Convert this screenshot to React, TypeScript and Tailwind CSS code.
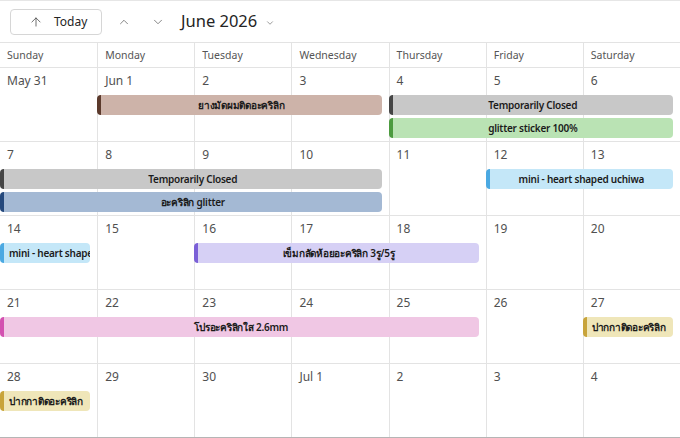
import { ArrowUp, ChevronDown, ChevronUp } from 'lucide-react'

type Tone = 'brown' | 'gray' | 'green' | 'steel' | 'sky' | 'violet' | 'pink' | 'gold'

interface CalEvent {
  title: string
  start: number
  span: number
  lane: number
  tone: Tone
}

interface Week {
  days: string[]
  events: CalEvent[]
}

const toneClass: Record<Tone, string> = {
  brown: 'bg-[#cdb3a9] border-[#5b3a2c]',
  gray: 'bg-[#c8c8c8] border-[#454545]',
  green: 'bg-[#bae3b4] border-[#4c9b3f]',
  steel: 'bg-[#a4b9d4] border-[#24487c]',
  sky: 'bg-[#c4e7f8] border-[#4ba9e2]',
  violet: 'bg-[#d6d0f5] border-[#7b60d7]',
  pink: 'bg-[#f0c7e4] border-[#d350b0]',
  gold: 'bg-[#efe6b9] border-[#c8a43b]',
}

const colStart = ['col-start-1', 'col-start-2', 'col-start-3', 'col-start-4', 'col-start-5', 'col-start-6', 'col-start-7']
const colSpan = ['', 'col-span-1', 'col-span-2', 'col-span-3', 'col-span-4', 'col-span-5', 'col-span-6', 'col-span-7']
const laneRow = ['row-start-2', 'row-start-3']

const dayNames = ['Sunday', 'Monday', 'Tuesday', 'Wednesday', 'Thursday', 'Friday', 'Saturday']

const weeks: Week[] = [
  {
    days: ['May 31', 'Jun 1', '2', '3', '4', '5', '6'],
    events: [
      { title: 'ยางมัดผมติดอะคริลิก', start: 1, span: 3, lane: 0, tone: 'brown' },
      { title: 'Temporarily Closed', start: 4, span: 3, lane: 0, tone: 'gray' },
      { title: 'glitter sticker 100%', start: 4, span: 3, lane: 1, tone: 'green' },
    ],
  },
  {
    days: ['7', '8', '9', '10', '11', '12', '13'],
    events: [
      { title: 'Temporarily Closed', start: 0, span: 4, lane: 0, tone: 'gray' },
      { title: 'อะคริลิก glitter', start: 0, span: 4, lane: 1, tone: 'steel' },
      { title: 'mini - heart shaped uchiwa', start: 5, span: 2, lane: 0, tone: 'sky' },
    ],
  },
  {
    days: ['14', '15', '16', '17', '18', '19', '20'],
    events: [
      { title: 'mini - heart shaped uchiwa', start: 0, span: 1, lane: 0, tone: 'sky' },
      { title: 'เข็มกลัดห้อยอะคริลิก 3รู/5รู', start: 2, span: 3, lane: 0, tone: 'violet' },
    ],
  },
  {
    days: ['21', '22', '23', '24', '25', '26', '27'],
    events: [
      { title: 'โปรอะคริลิกใส 2.6mm', start: 0, span: 5, lane: 0, tone: 'pink' },
      { title: 'ปากกาติดอะคริลิก', start: 6, span: 1, lane: 0, tone: 'gold' },
    ],
  },
  {
    days: ['28', '29', '30', 'Jul 1', '2', '3', '4'],
    events: [{ title: 'ปากกาติดอะคริลิก', start: 0, span: 1, lane: 0, tone: 'gold' }],
  },
]

function EventBar({ ev }: { ev: CalEvent }) {
  const single = ev.span === 1
  return (
    <div
      className={`${colStart[ev.start]} ${colSpan[ev.span]} ${laneRow[ev.lane]} z-10 mr-[7px] flex h-[20px] items-center overflow-hidden whitespace-nowrap rounded-[4px] border-l-[4px] text-[10px] font-semibold leading-none tracking-[-0.25px] text-[#1b1b1b] ${toneClass[ev.tone]} ${single ? 'justify-start pl-[5px]' : 'justify-center'}`}
    >
      {ev.title}
    </div>
  )
}

export default function App() {
  return (
    <div className="h-[438px] w-[680px] overflow-hidden border-t border-[#e6e6e6] bg-white font-['Segoe_UI','Noto_Sans',sans-serif] text-[#242424]">
      {/* toolbar */}
      <div className="flex h-[41px] items-center pl-[10px]">
        <button className="flex h-[26px] w-[92px] items-center gap-[11px] rounded-[4px] border border-[#d6d6d6] pl-[18px] text-[12px]">
          <ArrowUp size={14} strokeWidth={1.3} className="text-[#424242]" />
          <span>Today</span>
        </button>
        <ChevronUp size={14} strokeWidth={1.3} className="ml-[15px] text-[#616161]" />
        <ChevronDown size={14} strokeWidth={1.3} className="ml-[20px] text-[#616161]" />
        <span className="ml-[16px] text-[16.5px] leading-none">June 2026</span>
        <ChevronDown size={10} strokeWidth={1.5} className="ml-[8px] mt-[2px] text-[#616161]" />
      </div>

      {/* weekday header */}
      <div className="grid h-[26px] grid-cols-7 border-y border-[#e3e3e3]">
        {dayNames.map((d, i) => (
          <div
            key={d}
            className={`flex items-center pl-[7px] pt-[2px] text-[10.5px] text-[#555] ${i > 0 ? 'border-l border-[#e3e3e3]' : ''}`}
          >
            {d}
          </div>
        ))}
      </div>

      {/* month weeks */}
      {weeks.map((w, wi) => (
        <div
          key={wi}
          className={`grid h-[74px] grid-cols-7 grid-rows-[27px_23px_23px_1fr] border-b ${wi === weeks.length - 1 ? 'border-[#b5b5b5]' : 'border-[#e3e3e3]'}`}
        >
          {w.days.map((d, di) => (
            <div
              key={d + di}
              className={`${colStart[di]} row-span-4 row-start-1 pl-[7px] pt-[4px] text-[12px] leading-[18px] text-[#505050] ${di > 0 ? 'border-l border-[#e3e3e3]' : ''}`}
            >
              {d}
            </div>
          ))}
          {w.events.map((ev, ei) => (
            <EventBar key={ei} ev={ev} />
          ))}
        </div>
      ))}
    </div>
  )
}
